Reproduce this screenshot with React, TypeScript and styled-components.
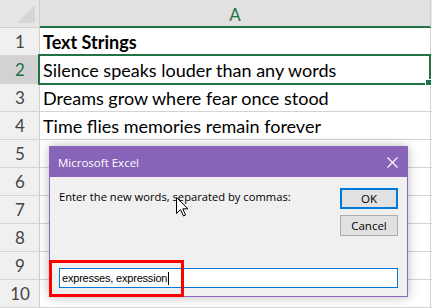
import React from 'react';
import styled, { createGlobalStyle } from 'styled-components';

const GlobalStyle = createGlobalStyle`
  html, body {
    margin: 0;
    padding: 0;
    background: #fff;
    overflow: hidden;
  }
  #root {
    width: 432px;
    height: 308px;
  }
`;

const Page = styled.div`
  position: relative;
  width: 432px;
  height: 308px;
  overflow: hidden;
  font-family: Lato, 'Noto Sans', sans-serif;
`;

const Sheet = styled.div`
  display: grid;
  grid-template-columns: 40px 391px 1px;
  grid-template-rows: 28px repeat(10, 28px);
`;

const Corner = styled.div`
  position: relative;
  background: #e6e6e6;
  border-right: 1px solid #cfcfcf;
  border-bottom: 1px solid #cfcfcf;
  box-sizing: border-box;
  &::after {
    content: '';
    position: absolute;
    right: 4px;
    bottom: 4px;
    width: 0;
    height: 0;
    border-left: 18px solid transparent;
    border-bottom: 18px solid #d6d6d6;
  }
`;

const ColHeader = styled.div<{ $active?: boolean }>`
  display: flex;
  align-items: center;
  justify-content: center;
  box-sizing: border-box;
  background: ${(p) => (p.$active ? '#e1e1e1' : '#e6e6e6')};
  border-bottom: 2px solid ${(p) => (p.$active ? '#217346' : '#cfcfcf')};
  border-right: 1px solid #cfcfcf;
  color: ${(p) => (p.$active ? '#217346' : '#444')};
  font-size: 17px;
  padding-top: 2px;
`;

const RowHeader = styled.div<{ $active?: boolean }>`
  display: flex;
  align-items: center;
  justify-content: center;
  box-sizing: border-box;
  background: ${(p) => (p.$active ? '#d2d2d2' : '#f0f0f0')};
  border-right: 1px solid #cfcfcf;
  border-bottom: 1px solid #d4d4d4;
  color: ${(p) => (p.$active ? '#217346' : '#444')};
  font-size: 17px;
  padding-left: 1px;
`;

const Cell = styled.div<{ $bold?: boolean; $selected?: boolean }>`
  position: relative;
  display: flex;
  align-items: center;
  box-sizing: border-box;
  padding-left: 3px;
  border-right: 1px solid #d4d4d4;
  border-bottom: 1px solid #d4d4d4;
  font-size: 18px;
  font-weight: ${(p) => (p.$bold ? 700 : 400)};
  color: #000;
  white-space: nowrap;
  ${(p) =>
    p.$selected &&
    `
    &::after {
      content: '';
      position: absolute;
      left: -2px;
      top: -2px;
      right: -1px;
      bottom: -2px;
      border: 2px solid #217346;
    }
    &::before {
      content: '';
      position: absolute;
      right: -2px;
      bottom: -3px;
      width: 5px;
      height: 5px;
      background: #217346;
      border: 1px solid #fff;
      z-index: 1;
    }
  `}
`;

const Gutter = styled.div<{ $header?: boolean }>`
  background: ${(p) => (p.$header ? '#e6e6e6' : '#fff')};
  border-bottom: 1px solid #d4d4d4;
  box-sizing: border-box;
`;

const Dialog = styled.div`
  position: absolute;
  left: 49px;
  top: 146px;
  width: 359px;
  height: 151px;
  box-sizing: border-box;
  border: 1px solid #8a68ba;
  background: #f0f0f0;
  box-shadow: 0 0 10px rgba(0, 0, 0, 0.28);
  display: flex;
  flex-direction: column;
  font-family: 'Open Sans', 'Noto Sans', sans-serif;
`;

const TitleBar = styled.div`
  height: 30px;
  background: #8764b8;
  display: flex;
  align-items: center;
  justify-content: space-between;
  padding: 0 9px 0 8px;
  color: #fff;
  font-size: 11.5px;
`;

const CloseIcon = styled.svg`
  width: 11px;
  height: 11px;
`;

const Body = styled.div`
  flex: 1;
  display: flex;
  flex-direction: column;
  padding: 11px 9px 8px 9px;
`;

const TopRow = styled.div`
  display: flex;
  justify-content: space-between;
  align-items: flex-start;
`;

const Prompt = styled.div`
  font-size: 11.2px;
  color: #000;
  padding-top: 1px;
`;

const Buttons = styled.div`
  display: flex;
  flex-direction: column;
  gap: 6px;
`;

const Button = styled.div<{ $default?: boolean }>`
  width: 58px;
  height: 21px;
  box-sizing: border-box;
  display: flex;
  align-items: center;
  justify-content: center;
  background: #e1e1e1;
  border: ${(p) => (p.$default ? '2px solid #0078d7' : '1px solid #adadad')};
  font-size: 11.5px;
  color: #000;
`;

const Input = styled.div`
  margin-top: auto;
  height: 20px;
  box-sizing: border-box;
  border: 1px solid #0078d7;
  background: #fff;
  display: flex;
  align-items: center;
  padding-left: 2px;
  font-family: 'Liberation Sans', Arial, sans-serif;
  font-size: 11px;
  letter-spacing: -0.2px;
  color: #000;
`;

const Caret = styled.span`
  display: inline-block;
  width: 1px;
  height: 13px;
  background: #000;
  margin-left: 1px;
`;

const Highlight = styled.div`
  position: absolute;
  left: 49px;
  top: 260px;
  width: 135px;
  height: 37px;
  box-sizing: border-box;
  border: 3px solid #ff0000;
`;

const Pointer = styled.svg`
  position: absolute;
  left: 176px;
  top: 197px;
  width: 13px;
  height: 20px;
`;

const rows: { text: string; bold?: boolean }[] = [
  { text: 'Text Strings', bold: true },
  { text: 'Silence speaks louder than any words' },
  { text: 'Dreams grow where fear once stood' },
  { text: 'Time flies memories remain forever' },
  { text: '' },
  { text: '' },
  { text: '' },
  { text: '' },
  { text: '' },
  { text: '' },
];

export default function App() {
  return (
    <Page>
      <GlobalStyle />
      <Sheet>
        <Corner />
        <ColHeader $active>A</ColHeader>
        <Gutter $header />
        {rows.map((r, i) => (
          <React.Fragment key={i}>
            <RowHeader $active={i === 1}>{i + 1}</RowHeader>
            <Cell $bold={r.bold} $selected={i === 1}>
              {r.text}
            </Cell>
            <Gutter />
          </React.Fragment>
        ))}
      </Sheet>

      <Dialog>
        <TitleBar>
          <span>Microsoft Excel</span>
          <CloseIcon viewBox="0 0 11 11">
            <path d="M0.5 0.5 L10.5 10.5 M10.5 0.5 L0.5 10.5" stroke="#fff" strokeWidth="1.1" />
          </CloseIcon>
        </TitleBar>
        <Body>
          <TopRow>
            <Prompt>Enter the new words, separated by commas:</Prompt>
            <Buttons>
              <Button $default>OK</Button>
              <Button>Cancel</Button>
            </Buttons>
          </TopRow>
          <Input>
            expresses, expression
            <Caret />
          </Input>
        </Body>
      </Dialog>

      <Highlight />

      <Pointer viewBox="0 0 13 20">
        <path
          d="M0.5 0.5 L0.5 16.5 L4.5 12.5 L7.5 19 L9.5 18 L6.8 11.8 L12 11.8 Z"
          fill="#fff"
          stroke="#000"
          strokeWidth="1"
          strokeLinejoin="miter"
        />
      </Pointer>
    </Page>
  );
}
